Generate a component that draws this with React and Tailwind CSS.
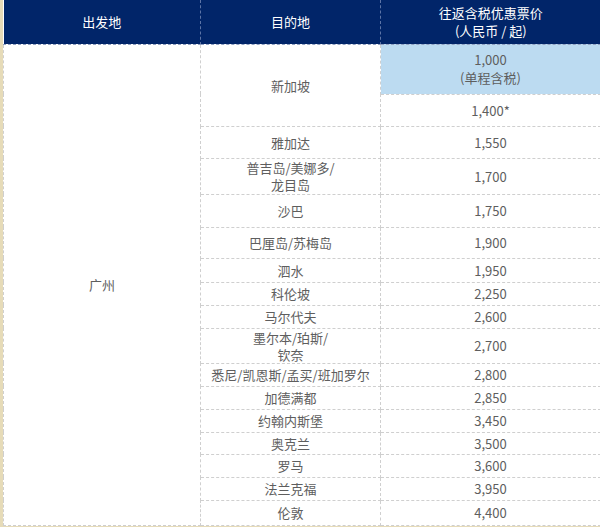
import React from "react";

const rows = [
  { dest: ["雅加达"], price: "1,550", h: "h-[32px]" },
  { dest: ["普吉岛/美娜多/", "龙目岛"], price: "1,700", h: "h-[36px]" },
  { dest: ["沙巴"], price: "1,750", h: "h-[33px]" },
  { dest: ["巴厘岛/苏梅岛"], price: "1,900", h: "h-[31px]" },
  { dest: ["泗水"], price: "1,950", h: "h-[24px]" },
  { dest: ["科伦坡"], price: "2,250", h: "h-[23px]" },
  { dest: ["马尔代夫"], price: "2,600", h: "h-[23px]" },
  { dest: ["墨尔本/珀斯/", "钦奈"], price: "2,700", h: "h-[35px]" },
  { dest: ["悉尼/凯恩斯/孟买/班加罗尔"], price: "2,800", h: "h-[23px]" },
  { dest: ["加德满都"], price: "2,850", h: "h-[23px]" },
  { dest: ["约翰内斯堡"], price: "3,450", h: "h-[23px]" },
  { dest: ["奥克兰"], price: "3,500", h: "h-[22px]" },
  { dest: ["罗马"], price: "3,600", h: "h-[23px]" },
  { dest: ["法兰克福"], price: "3,950", h: "h-[23px]" },
  { dest: ["伦敦"], price: "4,400", h: "h-[25px]" },
];

const cell = "border border-dashed border-[#cfcfcf] p-0 text-center align-middle";

export default function App() {
  return (
    <div
      className="w-[600px] h-[527px] overflow-hidden bg-[#e6dbb8] pl-[3px] pb-[2px] text-[13px] leading-[17px] text-[#5e5e5e]"
      style={{ fontFamily: '"Microsoft YaHei", "Noto Sans CJK SC", "Noto Sans", sans-serif' }}
    >
      <table className="w-[597px] border-collapse bg-white table-fixed">
        <colgroup>
          <col className="w-[197px]" />
          <col className="w-[180px]" />
          <col className="w-[220px]" />
        </colgroup>
        <thead>
          <tr className="h-[44px] bg-[#012569] text-white">
            <th className="p-0 font-normal border-r border-r-[#5d74a6] border-b border-dashed border-b-[#8f9fc0]">出发地</th>
            <th className="p-0 font-normal border-r border-r-[#5d74a6] border-b border-dashed border-b-[#8f9fc0]">目的地</th>
            <th className="p-0 font-normal border-b border-dashed border-b-[#8f9fc0]">
              <div className="leading-[18px]">往返含税优惠票价</div>
              <div className="leading-[18px]">(人民币 / 起)</div>
            </th>
          </tr>
        </thead>
        <tbody>
          <tr className="h-[50px]">
            <td className={cell} rowSpan={17}>广州</td>
            <td className={cell} rowSpan={2}>新加坡</td>
            <td className={`${cell} bg-[#bcdbf1]`}>
              <div className="leading-[18px]">1,000</div>
              <div className="leading-[18px]">(单程含税)</div>
            </td>
          </tr>
          <tr className="h-[32px]">
            <td className={cell}>1,400*</td>
          </tr>
          {rows.map((r) => (
            <tr key={r.price} className={r.h}>
              <td className={cell}>
                {r.dest.map((d) => (
                  <div key={d} className={r.dest.length > 1 ? "leading-[17px]" : ""}>
                    {d}
                  </div>
                ))}
              </td>
              <td className={cell}>{r.price}</td>
            </tr>
          ))}
        </tbody>
      </table>
    </div>
  );
}
